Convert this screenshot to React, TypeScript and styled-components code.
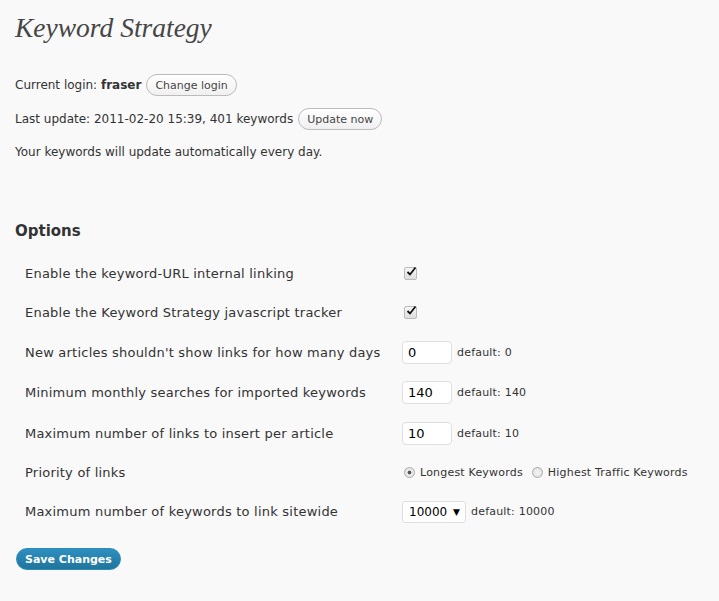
import React from "react";
import styled, { createGlobalStyle } from "styled-components";

const Global = createGlobalStyle`
  html, body { margin: 0; padding: 0; background: #f9f9f9; }
  body { font-family: "DejaVu Sans", Verdana, sans-serif; color: #333; }
`;

const Wrap = styled.div`
  padding: 9px 0 0 15px;
  display: flex;
  flex-direction: column;
  align-items: flex-start;
`;

const Title = styled.h2`
  margin: 0;
  font-family: "Liberation Serif", "Times New Roman", serif;
  font-style: italic;
  font-weight: normal;
  font-size: 27.5px;
  line-height: 38px;
  color: #464646;
`;

const Line = styled.div<{ $top: number }>`
  display: flex;
  align-items: center;
  gap: 5px;
  height: 24px;
  margin-top: ${(p) => p.$top}px;
  font-size: 12px;
`;

const Strong = styled.b`
  font-weight: bold;
`;

const PillButton = styled.button`
  font-family: "DejaVu Sans", Verdana, sans-serif;
  font-size: 11px;
  color: #464646;
  height: 22px;
  padding: 0 8px;
  border: 1px solid #bbb;
  border-radius: 11px;
  background: linear-gradient(#ffffff, #f0f0f0);
  cursor: pointer;
`;

const Heading = styled.h3`
  margin: 57px 0 0 0;
  font-size: 15px;
  line-height: 20px;
  font-weight: bold;
  color: #333;
`;

const Table = styled.div`
  margin-top: 13px;
  display: grid;
  grid-template-columns: 387px auto;
`;

const Label = styled.div<{ $h: number }>`
  height: ${(p) => p.$h}px;
  display: flex;
  align-items: center;
  padding-left: 10px;
  font-size: 13px;
  letter-spacing: 0.22px;
`;

const Field = styled.div<{ $h: number }>`
  height: ${(p) => p.$h}px;
  display: flex;
  align-items: center;
  gap: 5px;
`;

const Check = styled.span`
  width: 11px;
  height: 11px;
  margin-left: 2px;
  border: 1px solid #bbb;
  border-radius: 2px;
  background: linear-gradient(#f6f6f6, #dedede);
  position: relative;
  display: inline-block;
  svg { position: absolute; left: 0px; top: -2px; }
`;

const TextInput = styled.div`
  height: 21px;
  border: 1px solid #dfdfdf;
  border-radius: 4px;
  background: #fff;
  font-size: 13px;
  color: #000;
  display: flex;
  align-items: center;
  padding-left: 5px;
  box-sizing: content-box;
  width: 43px;
`;

const Hint = styled.span`
  font-size: 11px;
  letter-spacing: 0.2px;
  color: #333;
`;

const Radio = styled.span<{ $on?: boolean }>`
  width: 9px;
  height: 9px;
  border: 1px solid #aaa;
  border-radius: 50%;
  background: radial-gradient(circle, ${(p) => (p.$on ? "#555 0 1.6px, #e8e8e8 2.2px" : "#f4f4f4 0, #dcdcdc 100%")});
  display: inline-block;
  margin-left: 2px;
`;

const RadioLabel = styled.span`
  font-size: 11px;
  letter-spacing: 0.2px;
  margin-right: 2px;
`;

const Select = styled.div`
  height: 20px;
  border: 1px solid #dfdfdf;
  border-radius: 3px;
  background: #fff;
  font-size: 12px;
  color: #000;
  display: flex;
  align-items: center;
  justify-content: space-between;
  padding: 0 5px 0 6px;
  box-sizing: content-box;
  width: 51px;
`;

const Arrow = styled.span`
  font-size: 9px;
`;

const SaveButton = styled.button`
  margin-top: 17px;
  margin-left: 1px;
  height: 22px;
  padding: 0 8px;
  border: 1px solid #298cba;
  border-radius: 11px;
  background: linear-gradient(#2e8fc0, #21759b);
  color: #fff;
  font-family: "DejaVu Sans", Verdana, sans-serif;
  font-size: 11px;
  font-weight: bold;
  cursor: pointer;
`;

const CheckMark = () => (
  <svg width="12" height="12" viewBox="0 0 12 12">
    <path d="M2.5 6 L5 8.5 L10.5 1.5" stroke="#111" strokeWidth="1.8" fill="none" />
  </svg>
);

export default function App() {
  return (
    <>
      <Global />
      <Wrap>
        <Title>Keyword Strategy</Title>
        <Line $top={26}>
          <span>
            Current login: <Strong>fraser</Strong>
          </span>
          <PillButton>Change login</PillButton>
        </Line>
        <Line $top={10}>
          <span>Last update: 2011-02-20 15:39, 401 keywords</span>
          <PillButton>Update now</PillButton>
        </Line>
        <Line $top={9}>
          <span>Your keywords will update automatically every day.</span>
        </Line>
        <Heading>Options</Heading>
        <Table>
          <Label $h={39}>Enable the keyword-URL internal linking</Label>
          <Field $h={39}>
            <Check>
              <CheckMark />
            </Check>
          </Field>
          <Label $h={39}>Enable the Keyword Strategy javascript tracker</Label>
          <Field $h={39}>
            <Check>
              <CheckMark />
            </Check>
          </Field>
          <Label $h={40}>New articles shouldn't show links for how many days</Label>
          <Field $h={40}>
            <TextInput>0</TextInput>
            <Hint>default: 0</Hint>
          </Field>
          <Label $h={41}>Minimum monthly searches for imported keywords</Label>
          <Field $h={41}>
            <TextInput>140</TextInput>
            <Hint>default: 140</Hint>
          </Field>
          <Label $h={40}>Maximum number of links to insert per article</Label>
          <Field $h={40}>
            <TextInput>10</TextInput>
            <Hint>default: 10</Hint>
          </Field>
          <Label $h={39}>Priority of links</Label>
          <Field $h={39}>
            <Radio $on />
            <RadioLabel>Longest Keywords</RadioLabel>
            <Radio />
            <RadioLabel>Highest Traffic Keywords</RadioLabel>
          </Field>
          <Label $h={39}>Maximum number of keywords to link sitewide</Label>
          <Field $h={39}>
            <Select>
              <span>10000</span>
              <Arrow>▼</Arrow>
            </Select>
            <Hint>default: 10000</Hint>
          </Field>
        </Table>
        <SaveButton>Save Changes</SaveButton>
      </Wrap>
    </>
  );
}
